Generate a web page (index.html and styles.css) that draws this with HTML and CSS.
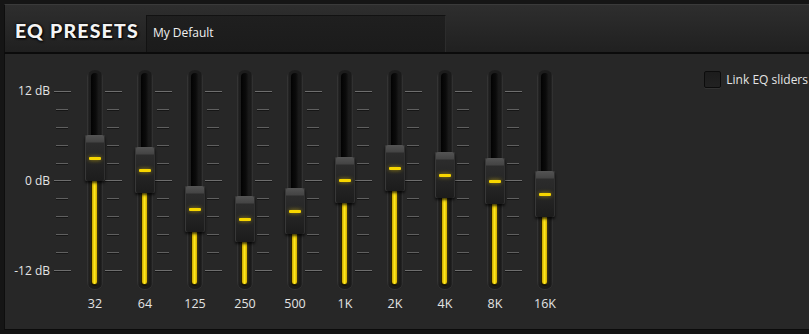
FILE: index.html
```html
<!DOCTYPE html>
<html lang="en">
<head>
    <meta charset="UTF-8">
    <meta name="viewport" content="width=device-width, initial-scale=1.0">
    <title>EQ Presets</title>
    <link rel="stylesheet" href="styles.css">
</head>
<body>
    <header class="presets">
        <h1 class="presets-title">EQ PRESETS</h1>
        <div class="preset-field">My Default</div>
    </header>

    <main class="eq-panel">
        <div class="eq">
            <div class="scale">
                <div class="scale-labels">
                    <span>12 dB</span>
                    <span>0 dB</span>
                    <span>-12 dB</span>
                </div>
                <div class="ticks"><i class="major"></i><i></i><i></i><i></i><i></i><i class="major"></i><i></i><i></i><i></i><i></i><i class="major"></i></div>
            </div>

            <div class="band" style="--db: 3.05">
                <div class="slot">
                    <div class="rail"><div class="fill"></div><div class="knob"></div></div>
                    <span class="freq">32</span>
                </div>
                <div class="ticks"><i class="major"></i><i></i><i></i><i></i><i></i><i class="major"></i><i></i><i></i><i></i><i></i><i class="major"></i></div>
            </div>

            <div class="band" style="--db: 1.35">
                <div class="slot">
                    <div class="rail"><div class="fill"></div><div class="knob"></div></div>
                    <span class="freq">64</span>
                </div>
                <div class="ticks"><i class="major"></i><i></i><i></i><i></i><i></i><i class="major"></i><i></i><i></i><i></i><i></i><i class="major"></i></div>
            </div>

            <div class="band" style="--db: -3.75">
                <div class="slot">
                    <div class="rail"><div class="fill"></div><div class="knob"></div></div>
                    <span class="freq">125</span>
                </div>
                <div class="ticks"><i class="major"></i><i></i><i></i><i></i><i></i><i class="major"></i><i></i><i></i><i></i><i></i><i class="major"></i></div>
            </div>

            <div class="band" style="--db: -5.15">
                <div class="slot">
                    <div class="rail"><div class="fill"></div><div class="knob"></div></div>
                    <span class="freq">250</span>
                </div>
                <div class="ticks"><i class="major"></i><i></i><i></i><i></i><i></i><i class="major"></i><i></i><i></i><i></i><i></i><i class="major"></i></div>
            </div>

            <div class="band" style="--db: -4">
                <div class="slot">
                    <div class="rail"><div class="fill"></div><div class="knob"></div></div>
                    <span class="freq">500</span>
                </div>
                <div class="ticks"><i class="major"></i><i></i><i></i><i></i><i></i><i class="major"></i><i></i><i></i><i></i><i></i><i class="major"></i></div>
            </div>

            <div class="band" style="--db: 0.1">
                <div class="slot">
                    <div class="rail"><div class="fill"></div><div class="knob"></div></div>
                    <span class="freq">1K</span>
                </div>
                <div class="ticks"><i class="major"></i><i></i><i></i><i></i><i></i><i class="major"></i><i></i><i></i><i></i><i></i><i class="major"></i></div>
            </div>

            <div class="band" style="--db: 1.7">
                <div class="slot">
                    <div class="rail"><div class="fill"></div><div class="knob"></div></div>
                    <span class="freq">2K</span>
                </div>
                <div class="ticks"><i class="major"></i><i></i><i></i><i></i><i></i><i class="major"></i><i></i><i></i><i></i><i></i><i class="major"></i></div>
            </div>

            <div class="band" style="--db: 0.8">
                <div class="slot">
                    <div class="rail"><div class="fill"></div><div class="knob"></div></div>
                    <span class="freq">4K</span>
                </div>
                <div class="ticks"><i class="major"></i><i></i><i></i><i></i><i></i><i class="major"></i><i></i><i></i><i></i><i></i><i class="major"></i></div>
            </div>

            <div class="band" style="--db: 0">
                <div class="slot">
                    <div class="rail"><div class="fill"></div><div class="knob"></div></div>
                    <span class="freq">8K</span>
                </div>
                <div class="ticks"><i class="major"></i><i></i><i></i><i></i><i></i><i class="major"></i><i></i><i></i><i></i><i></i><i class="major"></i></div>
            </div>

            <div class="band" style="--db: -1.85">
                <div class="slot">
                    <div class="rail"><div class="fill"></div><div class="knob"></div></div>
                    <span class="freq">16K</span>
                </div>
            </div>
        </div>

        <label class="link"><span class="link-box"></span>Link EQ sliders</label>
    </main>
</body>
</html>
```

FILE: styles.css
```css
body {
    margin: 0;
    height: 334px;
    box-sizing: border-box;
    padding: 4px 0 0 4px;
    overflow: hidden;
    background-color: #151515;
    font-family: "Open Sans", Arial, sans-serif;
    color: #e4e4e4;
}
.presets {
    display: flex;
    align-items: flex-end;
    gap: 7px;
    height: 47px;
    padding-left: 10px;
    border-top: 1px solid #3a3a3a;
    border-left: 1px solid #0e0e0e;
    border-bottom: 2px solid #0b0b0b;
    background: linear-gradient(#2e2e2e, #202020);
}
.presets-title {
    align-self: center;
    margin: 3px 0 0;
    font-family: Lato, "DejaVu Sans", sans-serif;
    font-weight: 900;
    font-size: 19.5px;
    line-height: 19px;
    letter-spacing: 1.2px;
    color: #f4f4f4;
    text-shadow: 1px 1px 2px #000, 0 0 3px #000;
}
.preset-field {
    display: flex;
    align-items: center;
    width: 300px;
    height: 37px;
    box-sizing: border-box;
    padding: 0 0 4px 6px;
    border-top: 1px solid #121212;
    border-left: 1px solid #121212;
    border-right: 1px solid #2c2c2c;
    background: linear-gradient(#1f1f1f, #1b1b1b);
    font-size: 12px;
    color: #f0f0f0;
}
.eq-panel {
    display: flex;
    align-items: flex-start;
    height: 276px;
    box-sizing: border-box;
    padding-top: 16px;
    border-left: 1px solid #0e0e0e;
    border-bottom: 1px solid #0b0b0b;
    background-color: #272727;
}
.eq {
    display: flex;
}
.scale {
    display: flex;
    padding-right: 13px;
}
.scale-labels {
    display: flex;
    flex-direction: column;
    justify-content: space-between;
    align-items: flex-end;
    width: 45px;
    height: 194px;
    margin: 14px 4px 0 0;
    font-size: 12px;
    line-height: 14px;
    color: #e4e4e4;
}
.ticks {
    display: flex;
    flex-direction: column;
    justify-content: space-between;
    width: 18px;
    height: 180px;
    margin-top: 21px;
}
.band .ticks {
    width: 30px;
}
.ticks i {
    display: block;
    width: 12px;
    height: 1px;
    margin-left: 2px;
    background-color: #606060;
    box-shadow: 0 1px 0 #161616;
}
.ticks i.major {
    width: 17px;
    margin-left: 0;
    background-color: #6e6e6e;
}
.band {
    display: flex;
}
.slot {
    display: flex;
    flex-direction: column;
    align-items: center;
    width: 20px;
}
.rail {
    position: relative;
    width: 16px;
    height: 219px;
    border-radius: 8px;
    background: linear-gradient(90deg, #3b3b3b, #1d1d1d 2px, #1a1a1a 14px, #383838);
    box-shadow: 0 1px 0 #333;
}
.rail::before {
    content: "";
    position: absolute;
    left: 4px;
    right: 4px;
    top: 3px;
    bottom: 3px;
    border-radius: 4px;
    background: linear-gradient(90deg, #020202, #0b0b0b 60%, #1c1c1c);
}
.fill {
    position: absolute;
    left: 5px;
    width: 5px;
    top: calc(133.5px - var(--db) * 7.5px);
    bottom: 5px;
    border-radius: 0 0 2px 2px;
    background: linear-gradient(90deg, #c8a400, #ffe81a 50%, #d6b000);
    box-shadow: 0 0 3px rgba(255, 210, 0, 0.45);
}
.knob {
    position: absolute;
    left: -2px;
    top: calc(87.5px - var(--db) * 7.5px);
    width: 20px;
    height: 46px;
    border-radius: 2px;
    background: linear-gradient(#545454, #444 7px, #2c2c2c 8px, #272727 22px, #1c1c1c);
    box-shadow: 0 2px 3px rgba(0, 0, 0, 0.75), inset 1px 0 #383838, inset -1px 0 #303030;
}
.knob::after {
    content: "";
    position: absolute;
    left: 4px;
    top: 22px;
    width: 12px;
    height: 3px;
    border-radius: 1px;
    background-color: #f7d600;
    box-shadow: 0 0 4px rgba(255, 214, 0, 0.6);
}
.freq {
    margin-top: 8px;
    font-size: 12.5px;
    line-height: 14px;
    color: #e4e4e4;
    white-space: nowrap;
}
.link {
    display: flex;
    align-items: center;
    gap: 5px;
    margin: 1px 1px 0 auto;
    font-size: 12px;
    color: #e4e4e4;
}
.link-box {
    width: 15px;
    height: 15px;
    border: 1px solid #0c0c0c;
    border-radius: 2px;
    background: linear-gradient(#1c1c1c, #222);
    box-shadow: 0 1px 0 #333;
}
```
